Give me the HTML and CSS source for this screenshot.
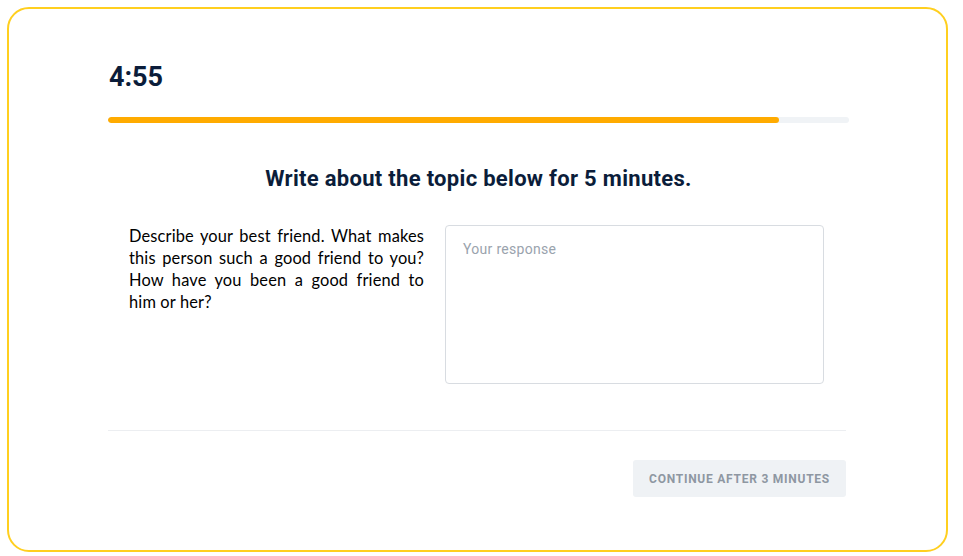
FILE: index.html
```html
<!DOCTYPE html>
<html>
<head>
<meta charset="utf-8">
<link rel="stylesheet" href="styles.css">
</head>
<body>
<div class="frame">
  <div class="content">
    <div class="timer">4:55</div>
    <div class="progress"><div class="fill"></div></div>
    <h1 class="title">Write about the topic below for 5 minutes.</h1>
    <div class="task">
      <p class="prompt">Describe your best friend. What makes this person such a good friend to you? How have you been a good friend to him or her?</p>
      <div class="response">Your response</div>
    </div>
    <div class="divider"></div>
    <div class="actions">
      <button class="continue">CONTINUE AFTER 3 MINUTES</button>
    </div>
  </div>
</div>
</body>
</html>
```
FILE: styles.css
```css
html, body {
  margin: 0;
  padding: 0;
  background: #ffffff;
}
body {
  padding: 7px 15px 4px 7px;
  font-family: "Roboto", "DejaVu Sans", sans-serif;
}
.frame {
  box-sizing: border-box;
  width: 941px;
  height: 545px;
  border: 2px solid #ffcf1f;
  border-radius: 22px;
  padding: 0 97px 0 99px;
}
.content {
  display: flex;
  flex-direction: column;
}
.timer {
  margin-top: 50px;
  font-size: 27px;
  font-weight: 700;
  color: #0b1d3a;
  line-height: 36px;
  padding-left: 1px;
}
.progress {
  margin-top: 22px;
  height: 6px;
  background: #f0f3f6;
  border-radius: 3px;
  overflow: hidden;
}
.fill {
  width: 671px;
  height: 100%;
  background: #ffab00;
  border-radius: 3px;
}
.title {
  margin: 42px 0 0;
  text-align: center;
  font-size: 22px;
  font-weight: 700;
  color: #0b1d3a;
  line-height: 28px;
  letter-spacing: 0.3px;
}
.task {
  display: flex;
  gap: 21px;
  margin-top: 32px;
  padding-left: 21px;
}
.prompt {
  margin: 0;
  width: 295px;
  padding-top: 0;
  font-family: "Lato", "Open Sans", sans-serif;
  font-size: 16.4px;
  letter-spacing: 0.15px;
  line-height: 22px;
  text-align: justify;
  color: #000000;
}
.response {
  box-sizing: border-box;
  width: 379px;
  height: 159px;
  border: 1px solid #d8dce1;
  border-radius: 4px;
  padding: 15px 17px;
  font-size: 14px;
  color: #9aa3ad;
  letter-spacing: 0.3px;
}
.divider {
  margin-top: 46px;
  height: 1px;
  background: #eceef1;
  width: 738px;
}
.actions {
  display: flex;
  justify-content: flex-end;
  margin-top: 29px;
  padding-right: 3px;
}
.continue {
  width: 213px;
  height: 37px;
  border: none;
  border-radius: 3px;
  background: #eff2f5;
  color: #8e97a2;
  font-family: "Roboto", sans-serif;
  font-weight: 700;
  font-size: 12px;
  letter-spacing: 0.75px;
  padding: 0;
}
```
